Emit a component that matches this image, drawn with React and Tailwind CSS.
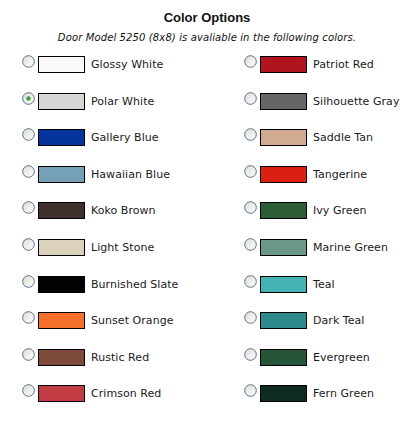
const left = [
  { name: 'Glossy White', color: '#fcf9f9' },
  { name: 'Polar White', color: '#d6d6d6', checked: true },
  { name: 'Gallery Blue', color: '#03339b' },
  { name: 'Hawaiian Blue', color: '#76a0b6' },
  { name: 'Koko Brown', color: '#3e2f2c' },
  { name: 'Light Stone', color: '#dcd2bb' },
  { name: 'Burnished Slate', color: '#020202' },
  { name: 'Sunset Orange', color: '#f5712a' },
  { name: 'Rustic Red', color: '#7d4a3c' },
  { name: 'Crimson Red', color: '#c13c45' },
];

const right = [
  { name: 'Patriot Red', color: '#b0151f' },
  { name: 'Silhouette Gray', color: '#666666' },
  { name: 'Saddle Tan', color: '#d0aa93' },
  { name: 'Tangerine', color: '#da2010' },
  { name: 'Ivy Green', color: '#2b5e36' },
  { name: 'Marine Green', color: '#6a9888' },
  { name: 'Teal', color: '#45b3b6' },
  { name: 'Dark Teal', color: '#2e8b8b' },
  { name: 'Evergreen', color: '#27553a' },
  { name: 'Fern Green', color: '#0d2b1e' },
];

const Radio = ({ checked }) => (
  <svg width="13" height="13" viewBox="0 0 13 13" className="shrink-0">
    <defs>
      <linearGradient id="rg" x1="0" y1="0" x2="1" y2="1">
        <stop offset="0" stopColor="#dcdcd6" />
        <stop offset="1" stopColor="#ffffff" />
      </linearGradient>
    </defs>
    <circle cx="6.5" cy="6.5" r="5.8" fill="url(#rg)" stroke="#5b6f8a" strokeWidth="1" />
    {checked && <circle cx="6.5" cy="6.5" r="2.2" fill="#36a83c" />}
  </svg>
);

const Row = ({ item }) => (
  <div className="flex items-start h-[36.6px]">
    <Radio checked={item.checked} />
    <div className="ml-[3px] mt-[1px] w-[47px] h-[17px] border border-black shrink-0" style={{ backgroundColor: item.color }} />
    <span className="ml-[6px] mt-[1px] text-[11px] leading-[17px] tracking-[0.05px] text-[#1a1a1a]">{item.name}</span>
  </div>
);

export default function App() {
  return (
    <div className="w-[405px] h-[423px] bg-white text-black" style={{ fontFamily: '"DejaVu Sans", Verdana, sans-serif' }}>
      <div className="pt-[10px] pl-[9px] text-center">
        <h1 className="text-[13px] leading-[16px] font-bold text-[#111]" style={{ fontFamily: '"Liberation Sans", Arial, sans-serif' }}>
          Color Options
        </h1>
        <p className="mt-[5px] text-[10px] leading-[14px] italic tracking-[0.12px] text-[#111]">
          Door Model 5250 (8x8) is avaliable in the following colors.
        </p>
      </div>
      <div className="flex pl-[22px] mt-[10px]">
        <div className="w-[222px]">
          {left.map((c) => <Row key={c.name} item={c} />)}
        </div>
        <div>
          {right.map((c) => <Row key={c.name} item={c} />)}
        </div>
      </div>
    </div>
  );
}
